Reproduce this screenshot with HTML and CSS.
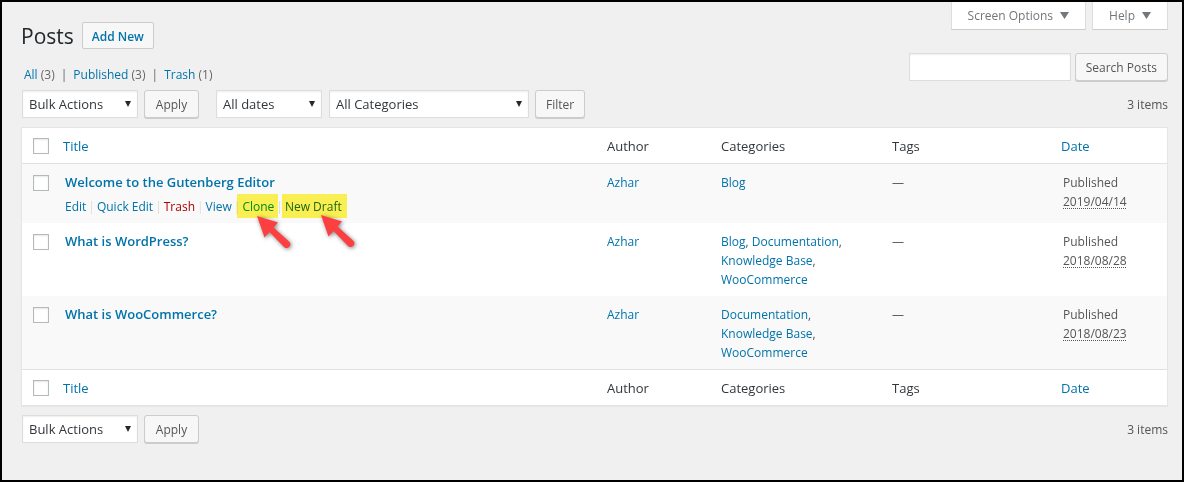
FILE: index.html
```html
<!DOCTYPE html>
<html lang="en">
<head>
<meta charset="utf-8">
<title>Posts</title>
<link rel="stylesheet" href="styles.css">
</head>
<body>
<main class="wrap">
  <div class="top">
    <div class="top-left">
      <div class="heading">
        <h1>Posts</h1>
        <a class="add-new" href="#">Add New</a>
      </div>
      <nav class="views">
        <a href="#">All <span>(3)</span></a><i>|</i><a href="#">Published <span>(3)</span></a><i>|</i><a href="#">Trash <span>(1)</span></a>
      </nav>
    </div>
    <div class="top-right">
      <div class="meta-links">
        <button type="button" class="meta-button">Screen Options <svg width="9" height="7" viewBox="0 0 9 7"><path d="M0 0h9L4.500 7z"/></svg></button>
        <button type="button" class="meta-button">Help <svg width="9" height="7" viewBox="0 0 9 7"><path d="M0 0h9L4.500 7z"/></svg></button>
      </div>
      <form class="search">
        <input type="search" class="search-input" aria-label="Search Posts">
        <button type="button" class="button">Search Posts</button>
      </form>
    </div>
  </div>

  <div class="tablenav">
    <div class="nav-group">
      <span class="select bulk"><select aria-label="Bulk action"><option>Bulk Actions</option></select><svg width="6" height="6" viewBox="0 0 6 6"><path d="M0 0h6L3 6z"/></svg></span>
      <button type="button" class="button apply">Apply</button>
    </div>
    <div class="nav-group">
      <span class="select dates"><select aria-label="Filter by date"><option>All dates</option></select><svg width="6" height="6" viewBox="0 0 6 6"><path d="M0 0h6L3 6z"/></svg></span>
      <span class="select cats"><select aria-label="Filter by category"><option>All Categories</option></select><svg width="6" height="6" viewBox="0 0 6 6"><path d="M0 0h6L3 6z"/></svg></span>
      <button type="button" class="button">Filter</button>
    </div>
    <span class="count">3 items</span>
  </div>

  <table class="posts">
    <colgroup><col class="c-check"><col><col class="c-author"><col class="c-cats"><col class="c-tags"><col class="c-date"></colgroup>
    <thead>
      <tr><td class="check"><input type="checkbox" aria-label="Select all"></td><th class="sort"><a href="#">Title</a></th><th>Author</th><th>Categories</th><th>Tags</th><th class="sort"><a href="#">Date</a></th></tr>
    </thead>
    <tbody>
      <tr>
        <td class="check"><input type="checkbox" aria-label="Select Welcome to the Gutenberg Editor"></td>
        <td class="title-cell">
          <a class="row-title" href="#">Welcome to the Gutenberg Editor</a>
          <div class="row-actions">
            <a href="#">Edit</a><i>|</i><a href="#">Quick Edit</a><i>|</i><a class="trash" href="#">Trash</a><i>|</i><a href="#">View</a><i>|</i><a class="marked clone" href="#">Clone<svg class="pointer" width="42" height="40" viewBox="0 0 42 40"><path d="M3 3L24 9.500L19.500 14.500L35 28.500A3.700 3.700 0 0 1 30 34L15.500 19L10.500 24.500Z"/></svg></a><i>|</i><a class="marked draft" href="#">New Draft<svg class="pointer" width="42" height="40" viewBox="0 0 42 40"><path d="M3 3L24 9.500L19.500 14.500L35 28.500A3.700 3.700 0 0 1 30 34L15.500 19L10.500 24.500Z"/></svg></a>
          </div>
        </td>
        <td><a href="#">Azhar</a></td>
        <td><a href="#">Blog</a></td>
        <td>—</td>
        <td>Published<br><abbr>2019/04/14</abbr></td>
      </tr>
      <tr>
        <td class="check"><input type="checkbox" aria-label="Select What is WordPress?"></td>
        <td class="title-cell"><a class="row-title" href="#">What is WordPress?</a></td>
        <td><a href="#">Azhar</a></td>
        <td><a href="#">Blog</a>, <a href="#">Documentation</a>, <a href="#">Knowledge Base</a>, <a href="#">WooCommerce</a></td>
        <td>—</td>
        <td>Published<br><abbr>2018/08/28</abbr></td>
      </tr>
      <tr>
        <td class="check"><input type="checkbox" aria-label="Select What is WooCommerce?"></td>
        <td class="title-cell"><a class="row-title" href="#">What is WooCommerce?</a></td>
        <td><a href="#">Azhar</a></td>
        <td><a href="#">Documentation</a>, <a href="#">Knowledge Base</a>, <a href="#">WooCommerce</a></td>
        <td>—</td>
        <td>Published<br><abbr>2018/08/23</abbr></td>
      </tr>
    </tbody>
    <tfoot>
      <tr><td class="check"><input type="checkbox" aria-label="Select all"></td><th class="sort"><a href="#">Title</a></th><th>Author</th><th>Categories</th><th>Tags</th><th class="sort"><a href="#">Date</a></th></tr>
    </tfoot>
  </table>

  <div class="tablenav bottom">
    <div class="nav-group">
      <span class="select bulk"><select aria-label="Bulk action"><option>Bulk Actions</option></select><svg width="6" height="6" viewBox="0 0 6 6"><path d="M0 0h6L3 6z"/></svg></span>
      <button type="button" class="button apply">Apply</button>
    </div>
    <span class="count">3 items</span>
  </div>
</main>
</body>
</html>
```
FILE: styles.css
```css
* { box-sizing: border-box; }
html { height: 100%; }
body {
  margin: 0;
  min-height: 100%;
  display: flex;
  background: #f0f0f0;
  border: 2px solid #000;
  color: #555;
  font: 12px/19px "Open Sans", "Noto Sans", sans-serif;
}
a { color: #0073aa; text-decoration: none; }
button, input, select { font: inherit; margin: 0; }
.wrap { flex: 1; min-width: 0; padding: 0 14px 0 19px; }

.top { display: flex; justify-content: space-between; }
.top-left { padding-top: 20px; }
.heading { display: flex; align-items: center; gap: 8px; height: 27px; }
h1 { margin: 0; padding-top: 2px; color: #23282d; font-size: 21px; line-height: 27px; font-weight: 400; }
.add-new {
  padding: 4px 9px 2px;
  border: 1px solid #ccc;
  border-radius: 2px;
  background: #f7f7f7;
  font-weight: 600;
}
.views { display: flex; gap: 6px; margin-top: 16px; padding-left: 3px; }
.views span, .views i { color: #666; font-style: normal; }
.meta-links { display: flex; justify-content: flex-end; gap: 6px; }
.meta-button {
  display: flex;
  align-items: center;
  gap: 7px;
  height: 28px;
  padding: 0 16px;
  border: 1px solid #ddd;
  border-top: 0;
  border-bottom-color: #ccc;
  background: #fff;
  color: #72777c;
}
.meta-button svg { fill: #72777c; }
.search { display: flex; justify-content: flex-end; gap: 4px; margin-top: 23px; }
.search-input {
  width: 162px;
  height: 28px;
  padding: 3px 5px;
  border: 1px solid #ddd;
  background: #fff;
  box-shadow: inset 0 1px 2px rgba(0, 0, 0, .07);
}
.button {
  height: 28px;
  padding: 0 10px;
  border: 1px solid #ccc;
  border-radius: 3px;
  background: #f7f7f7;
  box-shadow: 0 1px 0 #ccc;
  color: #555;
}
.apply { min-width: 55px; }

.tablenav { display: flex; gap: 17px; margin: 6px 0 9px; padding-left: 1px; }
.nav-group { display: flex; gap: 6px; }
.nav-group .cats { margin-left: 1px; }
.select { display: grid; align-items: center; }
.select select, .select svg { grid-area: 1 / 1; }
.select select {
  appearance: none;
  width: 100%;
  height: 28px;
  padding: 1px 6px 0;
  border: 1px solid #ddd;
  border-radius: 0;
  background: #fff;
  box-shadow: inset 0 1px 2px rgba(0, 0, 0, .07);
  color: #32373c;
  font-size: 13px;
}
.select svg { justify-self: end; margin-right: 7px; fill: #23282d; pointer-events: none; }
.bulk { width: 116px; }
.dates { width: 106px; }
.cats { width: 200px; }
.count { margin-left: auto; padding-top: 5px; }

.posts {
  width: 100%;
  table-layout: fixed;
  border-collapse: separate;
  border-spacing: 0;
  border: 1px solid #e5e5e5;
  background: #fff;
  box-shadow: 0 1px 1px rgba(0, 0, 0, .04);
}
.c-check { width: 33px; }
.c-author, .c-date { width: 114px; }
.c-cats, .c-tags { width: 171px; }
.posts th, .posts td { padding: 9px 10px 7px; text-align: left; vertical-align: top; }
.posts th { color: #32373c; font-size: 13px; font-weight: 400; }
.posts .sort { padding-left: 8px; }
.posts .title-cell { padding: 8px 10px; }
.posts thead th, .posts thead td { border-bottom: 1px solid #e1e1e1; }
.posts tfoot th, .posts tfoot td { border-top: 1px solid #e1e1e1; }
.posts tbody tr:nth-child(odd) { background: #f9f9f9; }
.posts .check { padding: 11px 0 0 11px; line-height: 0; }
.posts thead .check, .posts tfoot .check { padding-top: 10px; }
.check input {
  appearance: none;
  width: 16px;
  height: 16px;
  border: 1px solid #b4b9be;
  background: #fff;
  box-shadow: inset 0 1px 2px rgba(0, 0, 0, .1);
}
.row-title { display: block; font-size: 13px; line-height: 20px; font-weight: 600; }
.row-actions { display: flex; gap: 2px; margin-top: 5px; margin-bottom: -1px; }
.row-actions i { color: #ddd; font-style: normal; }
.row-actions .trash { color: #a00; }
.marked { position: relative; }
.marked::before {
  content: "";
  position: absolute;
  inset: -3px -4px -2px -5px;
  background: #fff454;
  mix-blend-mode: multiply;
}
.draft::before { left: -3px; right: -5px; }
.row-actions .clone { color: #00913f; }
.row-actions .draft { color: #1f6b2b; }
.pointer {
  position: absolute;
  left: 12px;
  top: 16px;
  z-index: 1;
  fill: #fc4041;
  filter: drop-shadow(1px 1px 2px rgba(0, 0, 0, .5));
}
.draft .pointer { left: 33px; top: 15px; }
abbr { text-decoration: underline dotted #555 1px; text-underline-offset: 2px; text-decoration-skip-ink: none; }
.bottom { margin: 9px 0 0; }
```
